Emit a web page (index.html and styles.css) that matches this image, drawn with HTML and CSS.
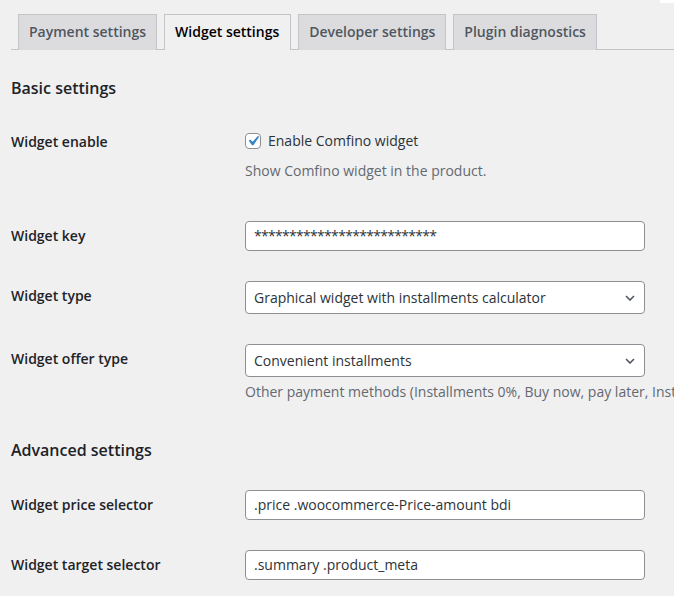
FILE: index.html
```html
<!DOCTYPE html>
<html lang="en">
<head>
<meta charset="utf-8">
<title>Comfino – Widget settings</title>
<link rel="stylesheet" href="styles.css">
</head>
<body>
<div class="corner"></div>
<div class="wrap">
  <nav class="tabs">
    <a class="tab">Payment settings</a>
    <a class="tab tab-active">Widget settings</a>
    <a class="tab">Developer settings</a>
    <a class="tab">Plugin diagnostics</a>
  </nav>

  <h2 class="section section-first">Basic settings</h2>
  <div class="form">
    <div class="row">
      <div class="label">Widget enable</div>
      <div class="field field-check">
        <label class="check-line">
          <span class="checkbox">
            <svg viewBox="0 0 20 20" width="20" height="20"><path d="M14.83 4.89l1.34.94-5.81 8.38H9.02L5.78 9.67l1.34-1.25 2.57 2.4z" fill="#3582c4"/></svg>
          </span>
          Enable Comfino widget
        </label>
        <p class="desc desc-check">Show Comfino widget in the product.</p>
      </div>
    </div>
    <div class="row">
      <div class="label">Widget key</div>
      <div class="field"><div class="input input-secret">**************************</div></div>
    </div>
    <div class="row">
      <div class="label">Widget type</div>
      <div class="field">
        <div class="select">Graphical widget with installments calculator
          <svg class="chev" viewBox="0 0 10 6" width="10" height="6"><path d="M1 1l4 4 4-4" fill="none" stroke="#50575e" stroke-width="1.6"/></svg>
        </div>
      </div>
    </div>
    <div class="row">
      <div class="label">Widget offer type</div>
      <div class="field">
        <div class="select">Convenient installments
          <svg class="chev" viewBox="0 0 10 6" width="10" height="6"><path d="M1 1l4 4 4-4" fill="none" stroke="#50575e" stroke-width="1.6"/></svg>
        </div>
        <p class="desc desc-offer">Other payment methods (Installments 0%, Buy now, pay later, Installments for companies)</p>
      </div>
    </div>
  </div>

  <h2 class="section section-adv">Advanced settings</h2>
  <div class="form">
    <div class="row">
      <div class="label">Widget price selector</div>
      <div class="field"><div class="input">.price .woocommerce-Price-amount bdi</div></div>
    </div>
    <div class="row">
      <div class="label">Widget target selector</div>
      <div class="field"><div class="input">.summary .product_meta</div></div>
    </div>
  </div>
</div>
</body>
</html>
```

FILE: styles.css
```css
html, body {
  margin: 0;
  padding: 0;
}
body {
  background: #f0f0f1;
  color: #1d2327;
  font-family: "Open Sans", "Noto Sans", sans-serif;
  font-size: 14px;
  overflow: hidden;
  width: 674px;
  height: 596px;
  position: relative;
}
.corner {
  position: absolute;
  top: 0;
  right: 0;
  width: 14px;
  height: 3px;
  background: #ffffff;
}
.wrap {
  padding-left: 11px;
}
.tabs {
  display: flex;
  padding-top: 14px;
  border-bottom: 1px solid #c3c4c7;
  gap: 7px;
  padding-left: 7px;
}
.tab {
  display: block;
  border: 1px solid #c3c4c7;
  border-bottom: 0;
  background: #dcdcde;
  color: #50575e;
  font-weight: 600;
  font-size: 14px;
  line-height: 24px;
  padding: 5px 10px 6px;
  margin-bottom: -1px;
  white-space: nowrap;
}
.tab-active {
  background: #f0f0f1;
  color: #000;
  padding-right: 11px;
}
.section {
  margin: 0;
  font-size: 16px;
  line-height: 24px;
  font-weight: 600;
  color: #1d2327;
}
.section-first {
  margin-top: 26px;
  margin-bottom: 12px;
}
.section-adv {
  margin-top: 21px;
  margin-bottom: 13px;
}
.row {
  display: grid;
  grid-template-columns: 234px 400px;
  padding: 15px 0;
}
.label {
  padding-top: 5px;
  font-weight: 600;
  line-height: 20px;
}
.field {
  min-width: 0;
}
.field-check {
  padding-top: 4px;
  padding-bottom: 10px;
}
.check-line {
  display: flex;
  align-items: center;
  height: 20px;
  line-height: 20px;
  color: #2c3338;
}
.checkbox {
  width: 14px;
  height: 14px;
  border: 1px solid #8c8f94;
  border-radius: 4px;
  background: #fff;
  margin-right: 7px;
  position: relative;
  flex: none;
}
.checkbox svg {
  position: absolute;
  left: -3px;
  top: -3px;
}
.desc {
  margin: 0;
  color: #646970;
  line-height: 20px;
  white-space: nowrap;
}
.desc-check {
  margin-top: 10px;
}
.desc-offer {
  margin-top: 5px;
}
.input, .select {
  box-sizing: border-box;
  width: 400px;
  background: #fff;
  border: 1px solid #8c8f94;
  border-radius: 4px;
  color: #2c3338;
  padding: 0 8px;
  white-space: nowrap;
}
.input {
  height: 30px;
  line-height: 28px;
}
.input-secret {
  letter-spacing: -0.7px;
}
.select {
  height: 33px;
  line-height: 31px;
  position: relative;
}
.chev {
  position: absolute;
  right: 9px;
  top: 13px;
}
```
